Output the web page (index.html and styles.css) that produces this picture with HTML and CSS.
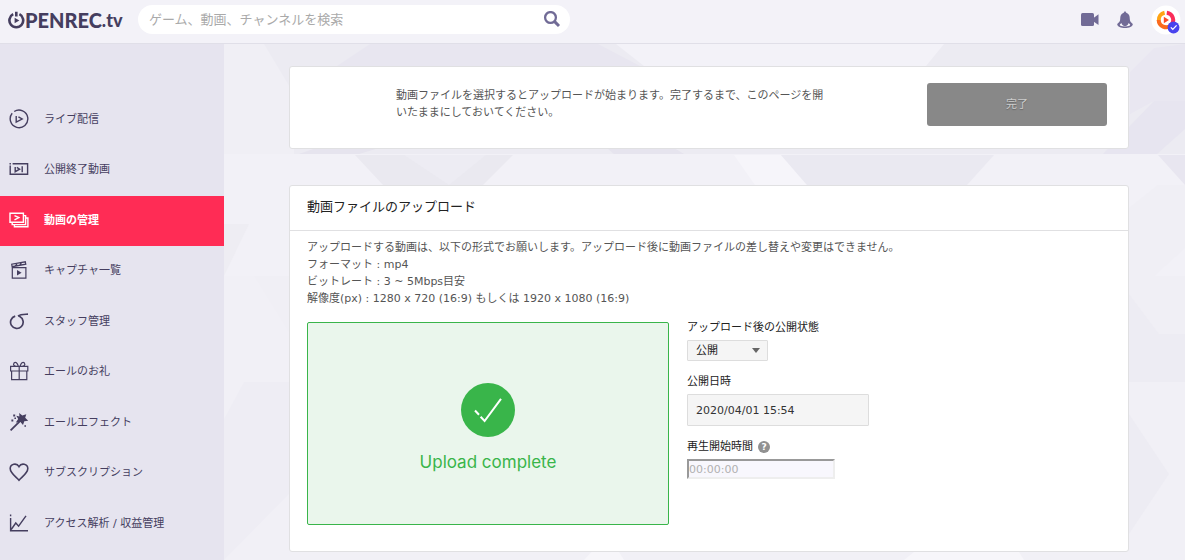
FILE: index.html
```html
<!DOCTYPE html>
<html lang="ja">

<head>
	<meta charset="utf-8">
	<meta name="viewport" content="width=device-width, initial-scale=1">
	<title>動画の管理 - OPENREC.tv</title>
	<link rel="stylesheet" href="styles.css">
</head>

<body>
	<header class="header">
		<a class="logo" href="#" aria-label="OPENREC.tv">
			<svg class="logo-ring" viewBox="0 0 17 18" width="17" height="18">
				<path d="M5.2 3.2A6.9 6.9 0 1 0 11.4 3.2M8.3 .8V5.6" fill="none" stroke="#453e5f" stroke-width="2.6" />
				<path d="M6.6 6.8L11.4 9.6L6.6 12.2Z" fill="#453e5f" />
			</svg>
			<span class="logo-name">PENREC</span><span class="logo-tv">.tv</span>
		</a>
		<form class="search">
			<input class="search-input" type="text" placeholder="ゲーム、動画、チャンネルを検索" aria-label="検索">
			<button class="search-button" type="button" aria-label="検索する">
				<svg viewBox="0 0 18 18" width="18" height="18" fill="none" stroke="#716b96">
					<circle cx="7.5" cy="6.5" r="5.4" stroke-width="2.3" />
					<path d="M11.4 10.4L16 15" stroke-width="3" />
				</svg>
			</button>
		</form>
		<div class="header-menu">
			<button class="icon-button" type="button" aria-label="動画">
				<svg viewBox="0 0 18 14" width="18" height="14" fill="#716b96">
					<rect x="0" y="0" width="13" height="13" rx="1.5" />
					<path d="M12.5 5L17.5 1.2V12L12.5 8.4Z" />
				</svg>
			</button>
			<button class="icon-button" type="button" aria-label="お知らせ">
				<svg viewBox="0 0 16 18" width="16" height="18">
					<path d="M8 0L9.3 1.8C12 2.8 12.8 5 12.8 8C12.8 10.5 13.8 11.2 15.8 13C15.8 15.8 12 17 8 17S.2 15.8.2 13C2.2 11.2 3.2 10.5 3.2 8C3.2 5 4 2.8 6.7 1.8Z" fill="#716b96" />
					<ellipse cx="8" cy="13.8" rx="5.2" ry="1.7" fill="#f3f2f8" />
					<path d="M5 12H11V13.6Q8 17 5 13.6Z" fill="#716b96" />
				</svg>
			</button>
			<a class="avatar" href="#" aria-label="マイページ">
				<svg viewBox="0 0 30 30" width="30" height="30">
					<circle cx="15" cy="15" r="14.5" fill="#fff" />
					<g fill="none" stroke-width="4">
						<path d="M15.8 7.8A7.3 7.3 0 0 1 20 20.2" stroke="#fa2c58" />
						<path d="M7.8 15.5A7.3 7.3 0 0 1 13.6 7.8" stroke="#ffa414" />
						<path d="M7.7 15A7.3 7.3 0 0 0 20 20.2" stroke="#fb6a1d" />
					</g>
					<path d="M12.8 11.8L18 15L12.8 18.2Z" fill="#fb4b28" />
					<circle cx="22.5" cy="22.5" r="5.9" fill="#4943ee" />
					<path d="M19.8 22.4L21.8 24.4L25.6 20.4" fill="none" stroke="#fff" stroke-width="1.3" />
				</svg>
			</a>
		</div>
	</header>

	<div class="wrapper">
		<nav class="sidebar">
			<ul class="menu">
				<li class="menu-item">
					<a class="menu-link" href="#">
						<svg class="menu-icon" viewBox="0 0 20 20">
							<path d="M5.2 2.5A8.8 8.8 0 1 1 3.2 4.3M7.2 7V13.2L13.2 10L9.4 7.8" />
						</svg>
						ライブ配信
					</a>
				</li>
				<li class="menu-item">
					<a class="menu-link" href="#">
						<svg class="menu-icon" viewBox="0 0 20 20">
							<path d="M3.6 4.7H18.6V15.3H1.2V6.5M1.2 3.9V5.4M6.2 8V12.7L10.6 10.2L7.8 8.4M13.2 7.2V13.2" />
						</svg>
						公開終了動画
					</a>
				</li>
				<li class="menu-item active">
					<a class="menu-link" href="#">
						<svg class="menu-icon" viewBox="0 0 20 20">
							<path d="M1 3.2H14.4V12.2H1ZM5.5 5.6L9.8 7.6L5.5 9.8M3.2 12.4V14.6H16.6V5.6H14.6M5.4 14.8V16.8H18.9V8H16.8" />
						</svg>
						動画の管理
					</a>
				</li>
				<li class="menu-item">
					<a class="menu-link" href="#">
						<svg class="menu-icon" viewBox="0 0 20 20">
							<path d="M3.3 7.6H16.9V18.1H3.3ZM3.1 6.7L2.7 4.2L16.3 1.8L16.8 4.2ZM6.7 5.9L8.2 3.4M11 5.1L12.5 2.6" stroke-width="1.2" />
							<path class="solid" d="M8 10V15.4L12.6 12.7Z" />
						</svg>
						キャプチャ一覧
					</a>
				</li>
				<li class="menu-item">
					<a class="menu-link" href="#">
						<svg class="menu-icon" viewBox="0 0 20 20">
							<path d="M6.2 5.1A6.3 6.3 0 1 0 10.8 5.6L9.2 4.8M9 5C11.5 3.2 14 3.4 19 3.2M10.7 5.4L12.4 6.8" stroke-width="1.7" />
						</svg>
						スタッフ管理
					</a>
				</li>
				<li class="menu-item">
					<a class="menu-link" href="#">
						<svg class="menu-icon" viewBox="0 0 20 20">
							<path d="M1.6 5.3H18.8V10H1.6ZM2.6 10V18.7H17.8V10M10.2 5.3V18.7M8.6 5.2C5 5.5 3.8 3.8 5 2C6.6.5 8.4 2 9.3 5.2M11.8 5.2C15.4 5.5 16.6 3.8 15.4 2C13.8.5 12 2 11.1 5.2" stroke-width="1.2" />
						</svg>
						エールのお礼
					</a>
				</li>
				<li class="menu-item">
					<a class="menu-link" href="#">
						<svg class="menu-icon" viewBox="0 0 20 20">
							<path d="M1.6 18.4L10.5 9.6" stroke-width="1.8" />
							<path class="solid" d="M10.2 1L13.3 3.4L17.3 2.2L16.2 5.8L19.2 8.7L15.3 9.2L14 13L11.4 10L6.8 10.4L9.2 7L7.3 3.7L10.4 4.4ZM4.2 2.5H6.2V4.5H4.2ZM2.4 7.5H4.3V9.4H2.4ZM5.4 5.4H7V7H5.4ZM15.4 13.2H17V14.8H15.4Z" />
						</svg>
						エールエフェクト
					</a>
				</li>
				<li class="menu-item">
					<a class="menu-link" href="#">
						<svg class="menu-icon" viewBox="0 0 20 20">
							<path d="M10 18.2C7 14.8 1.2 11.2 1.2 6.5C1.2 2 7.6.4 10 4.7C12.4.4 18.8 2 18.8 6.5C18.8 11.2 13 14.8 10 18.2Z" stroke-width="1.6" />
						</svg>
						サブスクリプション
					</a>
				</li>
				<li class="menu-item">
					<a class="menu-link" href="#">
						<svg class="menu-icon" viewBox="0 0 20 20">
							<path d="M1.6 1.5V3.2M1.6 5V17.8H19M2.2 16.5L6.8 10L9.6 13.2L17 2.8" />
						</svg>
						アクセス解析 / 収益管理
					</a>
				</li>
			</ul>
		</nav>

		<main class="content">
			<!-- triangle pattern behind the panels -->
			<svg class="backdrop" viewBox="0 0 961 516" preserveAspectRatio="xMinYMin slice" aria-hidden="true">
				<rect width="961" height="110" fill="#ecebf2" />
				<path d="M0 0H40L70 50V110H0Z" fill="#f0eff5" />
				<path d="M113 22L146 0H374L416 22Z" fill="#e8e6f0" />
				<path d="M392 0H720L702 22H420Z" fill="#f3f2f8" />
				<path d="M906 28L930 4L961 0V57H930L906 70Z" fill="#e9e7f1" />
				<path d="M930 57H961V85L933 110H879Z" fill="#e7e5f0" />
				<path d="M75 110L92 104H155L135 110Z" fill="#e6e4ee" />
				<path d="M390 110L383 104H450L460 110Z" fill="#e6e4ee" />
				<rect y="110" width="961" height="160" fill="#f2f1f7" />
				<path d="M131 111H289L259 141H159Z" fill="#eae9f0" />
				<path d="M180 111H262L225 141Z" fill="#edecf3" />
				<path d="M510 111H557L583 141H531Z" fill="#f6f5fa" />
				<path d="M557 111H770L743 141H583Z" fill="#eae9f1" />
				<path d="M934 111H961V141Z" fill="#e8e6f0" />
				<path d="M905 164L934 141H961V204L930 232H905Z" fill="#f0eff5" />
				<path d="M0 180L25 180L0 232Z" fill="#eeedf3" />
				<rect y="232" width="961" height="106" fill="#f0eff5" />
				<path d="M0 232H30L66 290V338H0Z" fill="#f1f0f6" />
				<path d="M905 250L935 290H961V338H905Z" fill="#edecf3" />
				<rect y="338" width="961" height="178" fill="#f1f0f6" />
				<path d="M20 338H65V450L0 516V375Z" fill="#eeedf4" />
				<path d="M905 370L945 430L905 490Z" fill="#edecf3" />
				<path d="M360 516L375 500H390L400 516ZM680 516L700 500H790L800 516Z" fill="#f7f6fa" />
			</svg>

			<section class="panel notice">
				<p class="notice-text">動画ファイルを選択するとアップロードが始まります。完了するまで、このページを開いたままにしておいてください。</p>
				<button class="done-button" type="button" disabled>完了</button>
			</section>

			<section class="panel upload">
				<h1 class="panel-title">動画ファイルのアップロード</h1>
				<div class="panel-body">
					<p class="description">
						アップロードする動画は、以下の形式でお願いします。アップロード後に動画ファイルの差し替えや変更はできません。<br>
						フォーマット : mp4<br>
						ビットレート : 3 ~ 5Mbps目安<br>
						解像度(px) : 1280 x 720 (16:9) もしくは 1920 x 1080 (16:9)
					</p>
					<div class="upload-row">
						<div class="drop-area">
							<svg viewBox="0 0 54 54" width="54" height="54">
								<circle cx="27" cy="27" r="27" fill="#39b54a" />
								<path d="M14 27.5L18 31.8M19.6 33.8L23.6 38L40 15.8" fill="none" stroke="#fff" stroke-width="2" />
							</svg>
							<p class="upload-status">Upload complete</p>
						</div>
						<form class="settings">
							<div class="field">
								<label class="field-label" for="status">アップロード後の公開状態</label>
								<div class="select-box">
									<select class="select" id="status">
										<option>公開</option>
									</select>
								</div>
							</div>
							<div class="field">
								<label class="field-label" for="publishDate">公開日時</label>
								<input class="date-input" type="text" id="publishDate" value="2020/04/01 15:54">
							</div>
							<div class="field">
								<div class="field-head">
									<label class="field-label" for="startTime">再生開始時間</label>
									<span class="help">?</span>
								</div>
								<input class="time-input" type="text" id="startTime" placeholder="00:00:00">
							</div>
						</form>
					</div>
				</div>
			</section>
		</main>
	</div>
</body>

</html>
```
FILE: styles.css
```css
* {
	box-sizing: border-box;
}

body {
	display: flex;
	flex-direction: column;
	min-height: 100vh;
	margin: 0;
	background-color: #f3f2f8;
	color: #555555;
	font-family: "DejaVu Sans", "Noto Sans CJK JP", sans-serif;
	font-size: 11px;
	line-height: 17px;
}

p,
h1,
ul {
	margin: 0;
	padding: 0;
}

svg {
	display: block;
}

button,
input,
select {
	font-family: inherit;
	font-size: 11px;
}

/* header */

.header {
	display: flex;
	align-items: center;
	height: 44px;
	padding: 0 4px 4px 8px;
	border-bottom: 1px solid #e0dfe8;
	background-color: #f3f2f8;
}

.logo {
	display: flex;
	align-items: center;
	width: 130px;
	color: #453e5f;
	font-family: Lato, sans-serif;
	font-weight: 900;
	line-height: 20px;
	text-decoration: none;
}

.logo-name {
	font-size: 20px;
}

.logo-tv {
	font-size: 18px;
}

.search {
	display: flex;
	align-items: center;
	flex: 0 1 432px;
	height: 29px;
	padding: 0 9px 0 11px;
	border-radius: 15px;
	background-color: #ffffff;
}

.search-input {
	flex: 1;
	min-width: 0;
	padding: 0;
	border: none;
	outline: none;
	background: none;
	font-size: 13px;
}

.search-input::placeholder {
	color: #aaaaaa;
}

.search-button,
.icon-button {
	padding: 0;
	border: none;
	background: none;
	cursor: pointer;
}

.header-menu {
	display: flex;
	align-items: center;
	gap: 18px;
	margin-left: auto;
}

/* sidebar */

.wrapper {
	display: flex;
	flex: 1;
}

.sidebar {
	flex: 0 0 224px;
	padding-top: 51px;
	background-color: #e6e4ef;
}

.menu {
	list-style: none;
}

.menu-item:nth-child(even) {
	margin-bottom: 1px;
}

.menu-link {
	display: flex;
	align-items: center;
	gap: 15px;
	height: 50px;
	padding: 0 0 2px 9px;
	color: #453e5f;
	text-decoration: none;
}

.menu-icon {
	width: 20px;
	height: 20px;
	fill: none;
	stroke: currentColor;
	stroke-width: 1.4;
}

.menu-icon .solid {
	fill: currentColor;
	stroke: none;
}

.active .menu-link {
	background-color: #ff2c55;
	color: #ffffff;
	font-weight: bold;
}

/* content */

.content {
	position: relative;
	flex: 1;
	min-width: 0;
	padding: 22px 56px 8px 65px;
	overflow: hidden;
}

.backdrop {
	position: absolute;
	top: 0;
	left: 0;
	width: 100%;
	height: 100%;
}

.panel {
	position: relative;
	border: 1px solid #e0e0e2;
	border-radius: 3px;
	background-color: #ffffff;
}

.notice {
	display: flex;
	align-items: flex-start;
	justify-content: space-between;
	margin-bottom: 36px;
	padding: 16px 21px 22px 106px;
}

.notice-text {
	max-width: 432px;
	padding-top: 4px;
}

.done-button {
	width: 180px;
	height: 43px;
	padding: 0 0 4px;
	border: none;
	border-radius: 3px;
	background-color: #888888;
	color: #cccccc;
	text-shadow: 0 1px 1px #666666;
}

.panel-title {
	padding: 12px 17px 15px;
	border-bottom: 1px solid #e0e0e2;
	color: #222222;
	font-size: 13px;
	font-weight: normal;
	line-height: 17px;
}

.panel-body {
	padding: 8px 17px 26px;
}

.upload-row {
	display: flex;
	gap: 18px;
	margin-top: 15px;
}

.drop-area {
	display: flex;
	flex-direction: column;
	align-items: center;
	flex: 0 1 362px;
	padding: 60px 0 50px;
	border: 1px solid #39b54a;
	border-radius: 2px;
	background-color: #eaf6ec;
}

.upload-status {
	margin-top: 13px;
	color: #39b54a;
	font-family: Inter, sans-serif;
	font-size: 17px;
	line-height: 24px;
}

.settings {
	display: flex;
	flex-direction: column;
	gap: 15px;
	color: #222222;
}

.field {
	display: flex;
	flex-direction: column;
	align-items: flex-start;
	gap: 6px;
}

.field-label {
	line-height: 12px;
}

.field-head {
	display: flex;
	align-items: center;
	gap: 5px;
	height: 12px;
}

.help {
	width: 12px;
	height: 12px;
	border-radius: 50%;
	background-color: #919191;
	color: #ffffff;
	font-size: 9px;
	font-weight: bold;
	line-height: 12px;
	text-align: center;
}

.select-box {
	position: relative;
}

/* drop-down arrow */
.select-box::after {
	content: "";
	position: absolute;
	top: 8px;
	right: 8px;
	border-top: 5px solid #666666;
	border-right: 4px solid transparent;
	border-left: 4px solid transparent;
	pointer-events: none;
}

.select {
	display: block;
	width: 81px;
	height: 21px;
	padding: 0 20px 0 8px;
	border: 1px solid #dddddd;
	border-radius: 1px;
	background-color: #f5f5f5;
	color: #222222;
	appearance: none;
}

.date-input {
	width: 182px;
	height: 32px;
	padding: 0 8px;
	border: 1px solid #dddddd;
	border-radius: 1px;
	background-color: #f5f5f5;
	color: #333333;
}

.time-input {
	width: 148px;
	height: 20px;
	padding: 0;
	border: 2px solid;
	border-color: #999999 #eeeeee #eeeeee #999999;
	background-color: #f8f7fd;
}

.time-input::placeholder {
	color: #b0b0b0;
}
```
